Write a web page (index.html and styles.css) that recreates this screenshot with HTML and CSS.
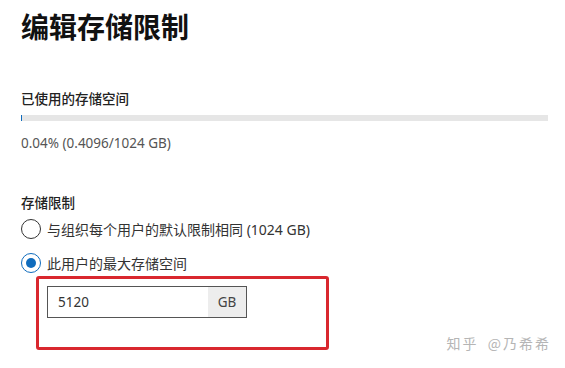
FILE: index.html
```html
<!DOCTYPE html>
<html lang="zh-CN">
<head>
<meta charset="utf-8">
<link rel="stylesheet" href="styles.css">
</head>
<body>
<div class="page">
  <h1 class="title">编辑存储限制</h1>
  <section class="usage">
    <div class="label">已使用的存储空间</div>
    <div class="bar"><div class="bar-fill" style="width:0.04%"></div></div>
    <div class="usage-text">0.04% (0.4096/1024 GB)</div>
  </section>
  <section class="limit">
    <div class="label">存储限制</div>
    <div class="radios">
      <label class="radio"><span class="dot"></span><span>与组织每个用户的默认限制相同 (1024 GB)</span></label>
      <label class="radio checked"><span class="dot"></span><span>此用户的最大存储空间</span></label>
    </div>
    <div class="highlight">
      <div class="field">
        <div class="field-value">5120</div>
        <div class="field-unit">GB</div>
      </div>
    </div>
  </section>
  <div class="watermark">知乎 @乃希希</div>
</div>
</body>
</html>
```
FILE: styles.css
```css
* { box-sizing: border-box; }
html, body { margin: 0; padding: 0; background: #fff; }
body {
  font-family: "Noto Sans", "Noto Sans CJK SC", sans-serif;
  color: #1f1f1f;
  width: 565px;
  height: 368px;
  overflow: hidden;
}
.page {
  position: relative;
  height: 368px;
  padding: 6px 17px 0 21px;
}
.title {
  margin: 0;
  font-size: 28px;
  line-height: 40px;
  font-weight: 700;
  color: #111;
  font-family: "Noto Sans CJK SC", sans-serif;
}
.usage { margin-top: 42px; }
.label {
  font-size: 13.5px;
  line-height: 20px;
  font-weight: 500;
  color: #222;
  font-family: "Noto Sans CJK SC", sans-serif;
}
.bar {
  margin-top: 7px;
  height: 6px;
  background: #e6e6e6;
  position: relative;
}
.bar-fill {
  height: 100%;
  min-width: 1px;
  background: #0f6cbd;
}
.usage-text {
  margin-top: 12px;
  font-size: 13.5px;
  line-height: 20px;
  color: #555;
}
.limit { margin-top: 39px; }
.radios {
  margin-top: 7px;
  display: flex;
  flex-direction: column;
  gap: 14px;
}
.radio {
  display: flex;
  align-items: center;
  gap: 6px;
  height: 20px;
  font-size: 14px;
  color: #333;
  font-family: "Noto Sans", "Noto Sans CJK SC", sans-serif;
}
.dot {
  width: 20px;
  height: 20px;
  border-radius: 50%;
  border: 1px solid #333;
  flex: none;
  display: flex;
  align-items: center;
  justify-content: center;
}
.checked .dot { border-color: #0f6cbd; }
.checked .dot::after {
  content: "";
  width: 10px;
  height: 10px;
  border-radius: 50%;
  background: #0f6cbd;
}
.highlight {
  margin-top: 3px;
  margin-left: 15px;
  width: 293px;
  height: 74px;
  border: 3px solid #d9272e;
  border-radius: 3px;
  padding: 7px 0 0 8px;
}
.field {
  display: flex;
  width: 200px;
  height: 32px;
  border: 1px solid #555;
  font-size: 13.5px;
  color: #333;
}
.field-value {
  flex: 1;
  display: flex;
  align-items: center;
  padding-left: 10px;
  background: #fff;
}
.field-unit {
  width: 38px;
  display: flex;
  align-items: center;
  justify-content: center;
  background: #ededed;
  color: #444;
}
.watermark {
  position: absolute;
  right: 14px;
  top: 334px;
  font-size: 14px;
  line-height: 18px;
  color: #b5b5b5;
  font-family: "Noto Sans CJK SC", sans-serif;
  letter-spacing: 2px;
  word-spacing: 4px;
}
```
